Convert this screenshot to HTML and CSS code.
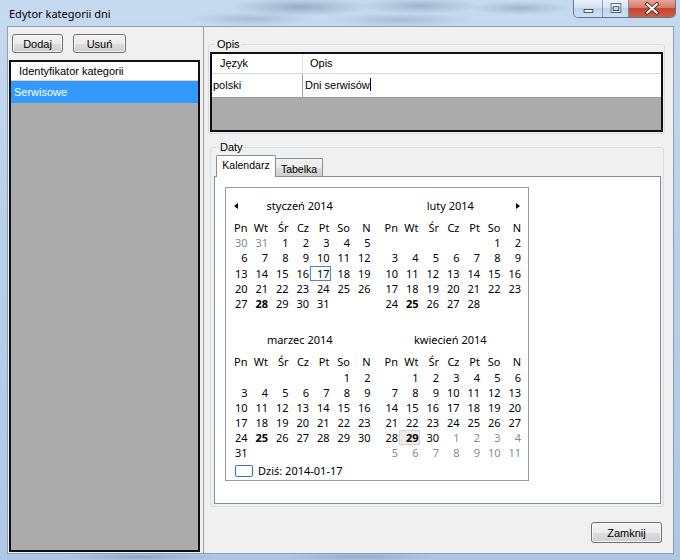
FILE: index.html
```html
<!DOCTYPE html>
<html lang="pl">
<head>
<meta charset="utf-8">
<title>Edytor kategorii dni</title>
<link rel="stylesheet" href="styles.css">
</head>
<body>
<div class="window">
  <div class="titlebar">
    <div class="title">Edytor kategorii dni</div>
    <div class="caption-buttons">
      <div class="cb cb-min"><svg width="29" height="18" viewBox="0 0 29 18"><rect x="10.5" y="9.5" width="9" height="3" fill="#fff" stroke="#3a4c63"/></svg></div>
      <div class="cb cb-max"><svg width="26" height="18" viewBox="0 0 26 18"><rect x="8.5" y="3.5" width="10" height="9" fill="none" stroke="#3a4c63"/><rect x="9.5" y="4.5" width="8" height="7" fill="none" stroke="#fff"/><rect x="10.5" y="6.5" width="6" height="4" fill="none" stroke="#3a4c63"/><line x1="10" y1="5.5" x2="17" y2="5.5" stroke="#fff"/></svg></div>
      <div class="cb cb-close"><svg width="48" height="18" viewBox="0 0 48 18"><path d="M19 4 L29 13 M29 4 L19 13" stroke="#5a2a22" stroke-width="4" stroke-linecap="square"/><path d="M19 4 L29 13 M29 4 L19 13" stroke="#fff" stroke-width="2" stroke-linecap="square"/></svg></div>
    </div>
  </div>
  <div class="client">
    <div class="left">
      <div class="btnrow">
        <button class="btn btn-dodaj">Dodaj</button>
        <button class="btn btn-usun">Usuń</button>
      </div>
      <div class="grid grid-left">
        <div class="gh">Identyfikator kategorii</div>
        <div class="sel">Serwisowe</div>
      </div>
    </div>
    <div class="right">
      <fieldset class="group group-opis">
        <legend>Opis</legend>
        <div class="grid grid-opis">
          <div class="grow ghead">
            <div class="c1">Język</div>
            <div class="c2">Opis</div>
          </div>
          <div class="grow gdata">
            <div class="c1">polski</div>
            <div class="c2">Dni serwisów<span class="caret"></span></div>
          </div>
        </div>
      </fieldset>
      <fieldset class="group group-daty">
        <legend>Daty</legend>
        <div class="tabs">
          <div class="tab tab-on">Kalendarz</div>
          <div class="tab tab-off">Tabelka</div>
        </div>
        <div class="tabpage">
          <div class="cal">
            <div class="months">
              <div class="month">
                <div class="mtitle"><span class="nav nav-prev"></span><span class="mname">styczeń 2014</span><span></span></div>
                <div class="days">
                  <span>Pn</span><span>Wt</span><span>Śr</span><span>Cz</span><span>Pt</span><span>So</span><span>N</span>
                  <span class="o">30</span><span class="o">31</span><span>1</span><span>2</span><span>3</span><span>4</span><span>5</span>
                  <span>6</span><span>7</span><span>8</span><span>9</span><span>10</span><span>11</span><span>12</span>
                  <span>13</span><span>14</span><span>15</span><span>16</span><span class="t">17</span><span>18</span><span>19</span>
                  <span>20</span><span>21</span><span>22</span><span>23</span><span>24</span><span>25</span><span>26</span>
                  <span>27</span><span class="b">28</span><span>29</span><span>30</span><span>31</span><span></span><span></span>
                  <span></span><span></span><span></span><span></span><span></span><span></span><span></span>
                </div>
              </div>
              <div class="month">
                <div class="mtitle"><span></span><span class="mname">luty 2014</span><span class="nav nav-next"></span></div>
                <div class="days">
                  <span>Pn</span><span>Wt</span><span>Śr</span><span>Cz</span><span>Pt</span><span>So</span><span>N</span>
                  <span></span><span></span><span></span><span></span><span></span><span>1</span><span>2</span>
                  <span>3</span><span>4</span><span>5</span><span>6</span><span>7</span><span>8</span><span>9</span>
                  <span>10</span><span>11</span><span>12</span><span>13</span><span>14</span><span>15</span><span>16</span>
                  <span>17</span><span>18</span><span>19</span><span>20</span><span>21</span><span>22</span><span>23</span>
                  <span>24</span><span class="b">25</span><span>26</span><span>27</span><span>28</span><span></span><span></span>
                  <span></span><span></span><span></span><span></span><span></span><span></span><span></span>
                </div>
              </div>
              <div class="month">
                <div class="mtitle"><span></span><span class="mname">marzec 2014</span><span></span></div>
                <div class="days">
                  <span>Pn</span><span>Wt</span><span>Śr</span><span>Cz</span><span>Pt</span><span>So</span><span>N</span>
                  <span></span><span></span><span></span><span></span><span></span><span>1</span><span>2</span>
                  <span>3</span><span>4</span><span>5</span><span>6</span><span>7</span><span>8</span><span>9</span>
                  <span>10</span><span>11</span><span>12</span><span>13</span><span>14</span><span>15</span><span>16</span>
                  <span>17</span><span>18</span><span>19</span><span>20</span><span>21</span><span>22</span><span>23</span>
                  <span>24</span><span class="b">25</span><span>26</span><span>27</span><span>28</span><span>29</span><span>30</span>
                  <span>31</span><span></span><span></span><span></span><span></span><span></span><span></span>
                </div>
              </div>
              <div class="month">
                <div class="mtitle"><span></span><span class="mname">kwiecień 2014</span><span></span></div>
                <div class="days">
                  <span>Pn</span><span>Wt</span><span>Śr</span><span>Cz</span><span>Pt</span><span>So</span><span>N</span>
                  <span></span><span>1</span><span>2</span><span>3</span><span>4</span><span>5</span><span>6</span>
                  <span>7</span><span>8</span><span>9</span><span>10</span><span>11</span><span>12</span><span>13</span>
                  <span>14</span><span>15</span><span>16</span><span>17</span><span>18</span><span>19</span><span>20</span>
                  <span>21</span><span>22</span><span>23</span><span>24</span><span>25</span><span>26</span><span>27</span>
                  <span>28</span><span class="b h">29</span><span>30</span><span class="o">1</span><span class="o">2</span><span class="o">3</span><span class="o">4</span>
                  <span class="o">5</span><span class="o">6</span><span class="o">7</span><span class="o">8</span><span class="o">9</span><span class="o">10</span><span class="o">11</span>
                </div>
              </div>
            </div>
            <div class="todayline"><span class="todaybox"></span><span>Dziś: 2014-01-17</span></div>
          </div>
        </div>
      </fieldset>
      <button class="btn btn-close">Zamknij</button>
    </div>
  </div>
</div>
</body>
</html>
```

FILE: styles.css
```css
* { box-sizing: border-box; }

html, body {
  margin: 0;
  padding: 0;
}

body {
  width: 680px;
  height: 560px;
  overflow: hidden;
  font-family: "Liberation Sans", Arial, sans-serif;
  font-size: 11px;
  color: #000;
  background:
    radial-gradient(ellipse 70px 9px at 300px 7px, rgba(70, 90, 120, 0.35), rgba(70, 90, 120, 0)),
    radial-gradient(ellipse 60px 8px at 420px 6px, rgba(70, 90, 120, 0.30), rgba(70, 90, 120, 0)),
    radial-gradient(ellipse 50px 7px at 520px 8px, rgba(70, 90, 120, 0.28), rgba(70, 90, 120, 0)),
    radial-gradient(ellipse 60px 7px at 250px 19px, rgba(70, 90, 120, 0.22), rgba(70, 90, 120, 0)),
    radial-gradient(ellipse 70px 7px at 400px 20px, rgba(70, 90, 120, 0.22), rgba(70, 90, 120, 0)),
    radial-gradient(ellipse 80px 4px at 140px 557px, rgba(70, 90, 120, 0.30), rgba(70, 90, 120, 0)),
    radial-gradient(ellipse 80px 4px at 360px 557px, rgba(70, 90, 120, 0.25), rgba(70, 90, 120, 0)),
    linear-gradient(180deg, #c6daef 0%, #b9d0e9 40%, #aec8e4 100%);
}

.window {
  display: flex;
  flex-direction: column;
  height: 560px;
}

/* ---------- title bar ---------- */
.titlebar {
  height: 26px;
  flex: none;
  display: flex;
  justify-content: space-between;
  align-items: flex-start;
}

.title {
  font-family: "Noto Sans", "Open Sans", sans-serif;
  font-size: 11px;
  line-height: 26px;
  padding-left: 9px;
  padding-top: 1px;
  color: #000;
}

.caption-buttons {
  display: flex;
  margin-right: 4px;
  height: 18px;
  border: 1px solid rgba(45, 65, 95, 0.65);
  border-top: none;
  border-radius: 0 0 5px 5px;
  overflow: hidden;
}

.cb {
  height: 17px;
  display: flex;
}

.cb-min {
  width: 29px;
  border-right: 1px solid rgba(45, 65, 95, 0.45);
  background: linear-gradient(180deg, rgba(255, 255, 255, 0.65) 0%, rgba(225, 236, 247, 0.55) 45%, rgba(190, 208, 230, 0.6) 50%, rgba(210, 226, 243, 0.7) 100%);
}

.cb-max {
  width: 26px;
  border-right: 1px solid rgba(45, 65, 95, 0.55);
  background: linear-gradient(180deg, rgba(255, 255, 255, 0.65) 0%, rgba(225, 236, 247, 0.55) 45%, rgba(190, 208, 230, 0.6) 50%, rgba(210, 226, 243, 0.7) 100%);
}

.cb-close {
  width: 46px;
  background: linear-gradient(180deg, #e7a597 0%, #d97a67 45%, #c54632 50%, #cf5d47 100%);
}

/* ---------- client ---------- */
.client {
  flex: 1;
  margin: 0 6px 6px 7px;
  border: 1px solid #8aa0b8;
  background: #f0f0f0;
  display: flex;
}

.left {
  width: 193px;
  flex: none;
  display: flex;
  flex-direction: column;
  padding-top: 7px;
}

.btnrow {
  display: flex;
  gap: 10px;
  padding-left: 4px;
}

.btn {
  height: 19px;
  padding: 0;
  font-family: "Liberation Sans", Arial, sans-serif;
  font-size: 11px;
  color: #000;
  border: 1px solid #707070;
  border-radius: 3px;
  background: linear-gradient(180deg, #f2f2f2 0%, #ebebeb 50%, #dddddd 50%, #cfcfcf 100%);
  box-shadow: inset 0 0 0 1px rgba(255, 255, 255, 0.75);
}

.btn-dodaj { width: 51px; }
.btn-usun { width: 53px; }

.grid {
  background: #ababab;
  border: 2px solid #101010;
}

.grid-left {
  flex: 1;
  margin: 7px 1px 1px 1px;
}

.gh {
  height: 19px;
  line-height: 19px;
  padding-left: 8px;
  background: #fff;
  border-bottom: 1px solid #d5d5d5;
}

.sel {
  height: 22px;
  line-height: 22px;
  padding-left: 3px;
  background: #3399ff;
  color: #fff;
}

/* ---------- right side ---------- */
.right {
  flex: 1;
  display: flex;
  flex-direction: column;
  border-left: 1px solid #a0a0a0;
  margin-left: 2px;
  padding-top: 11px;
}

.group {
  border: 1px solid #d5dfe5;
  border-radius: 3px;
  min-width: 0;
}

.group legend {
  padding: 0 2px;
  line-height: 13px;
  font-size: 11px;
}

.group-opis {
  margin: 0 8px 0 4px;
  padding: 1px 1px 1px 1px;
}

.group-opis legend { margin-left: 5px; }

.grid-opis {
  height: 80px;
}

.grow {
  display: flex;
  background: #fff;
}

.ghead {
  height: 20px;
  line-height: 19px;
  border-bottom: 1px solid #d5d5d5;
}

.gdata {
  height: 24px;
  line-height: 23px;
  border-bottom: 1px solid #a0a0a0;
}

.c1 {
  width: 91px;
  border-right: 1px solid #a0a0a0;
  padding-left: 1px;
}

.ghead .c1 {
  padding-left: 8px;
  border-right-color: #e3e3e3;
}

.c2 {
  flex: 1;
  padding-left: 2px;
}

.ghead .c2 { padding-left: 7px; }

.caret {
  display: inline-block;
  width: 1px;
  height: 13px;
  background: #000;
  vertical-align: -2px;
}

.group-daty {
  margin: 7px 9px 0 6px;
  padding: 1px 2px 2px 3px;
}

.group-daty legend { margin-left: 4px; }

.tabs {
  height: 21px;
  display: flex;
  align-items: flex-end;
  padding-left: 2px;
}

.tab {
  border: 1px solid #898c95;
  border-bottom: none;
  border-radius: 2px 2px 0 0;
  text-align: center;
  white-space: nowrap;
  font-size: 10.5px;
}

.tab-on {
  position: relative;
  z-index: 1;
  width: 60px;
  height: 22px;
  margin-bottom: -1px;
  line-height: 18px;
  background: #fff;
}

.tab-off {
  width: 48px;
  height: 18px;
  line-height: 18px;
  margin-left: -1px;
  padding-top: 1px;
  background: linear-gradient(180deg, #f2f2f2 0%, #ebebeb 50%, #dddddd 50%, #cfcfcf 100%);
}

.tabpage {
  height: 328px;
  border: 1px solid #898c95;
  background: #fff;
  padding: 10px;
}

/* ---------- calendar ---------- */
.cal {
  width: 304px;
  height: 294px;
  border: 1px solid #9b9b9b;
  padding: 7px 0 0 2px;
  font-family: "Noto Sans", "Open Sans", sans-serif;
  font-size: 11px;
  color: #000;
}

.months {
  display: grid;
  grid-template-columns: 143.5px 143.5px;
  column-gap: 7px;
  row-gap: 3px;
}

.mtitle {
  height: 22px;
  line-height: 22px;
  display: grid;
  grid-template-columns: 20px 1fr 20px;
  align-items: center;
}

.mname { text-align: center; }

.nav {
  width: 0;
  height: 0;
  border-top: 3.5px solid transparent;
  border-bottom: 3.5px solid transparent;
}

.nav-prev {
  border-right: 4px solid #000;
  margin-left: 6px;
}

.nav-next {
  border-left: 4px solid #000;
  justify-self: end;
  margin-right: 2px;
}

.days {
  margin-top: 3px;
  display: grid;
  grid-template-columns: repeat(7, 20.5px);
  grid-auto-rows: 15.2px;
}

.days span {
  text-align: right;
  padding-right: 1px;
  line-height: 15.2px;
}

.days .o { color: #8c8c8c; }
.days .b { font-weight: 700; }
.days .t { box-shadow: inset 0 0 0 1px #4f86c6; }
.days .h {
  background: #ebebeb;
  box-shadow: inset 0 0 0 1px #d4d4d4;
}

.todayline {
  margin-top: 2px;
  height: 16px;
  display: flex;
  align-items: center;
  gap: 5px;
  padding-left: 7px;
}

.todaybox {
  width: 18px;
  height: 12px;
  border: 1px solid #3a6fb5;
  border-radius: 2px;
}

.btn-close {
  align-self: flex-end;
  margin-top: 15px;
  margin-right: 11px;
  width: 71px;
  height: 21px;
}
```
